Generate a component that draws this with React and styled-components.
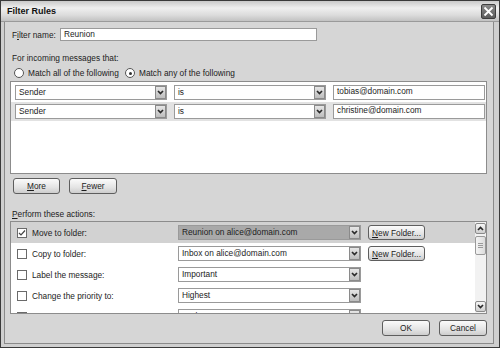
import React from 'react'
import styled, { createGlobalStyle } from 'styled-components'

const GlobalStyle = createGlobalStyle`
  html, body {
    margin: 0;
    padding: 0;
    background: #ffffff;
  }
  body {
    font-family: 'Liberation Sans', Arial, sans-serif;
    font-size: 8.3px;
    color: #1c1c1c;
  }
`

const conditions = [
  { field: 'Sender', op: 'is', value: 'tobias@domain.com' },
  { field: 'Sender', op: 'is', value: 'christine@domain.com', selected: true },
]

const actions = [
  { label: 'Move to folder:', value: 'Reunion on alice@domain.com', checked: true, folder: true, selected: true },
  { label: 'Copy to folder:', value: 'Inbox on alice@domain.com', folder: true },
  { label: 'Label the message:', value: 'Important' },
  { label: 'Change the priority to:', value: 'Highest' },
  { label: 'Set Junk Status to:', value: 'Junk' },
]

const Chevron = ({ up }) => (
  <svg width='7' height='5' viewBox='0 0 7 5'>
    <path
      d={up ? 'M1 4 L3.5 1.5 L6 4' : 'M1 1 L3.5 3.5 L6 1'}
      fill='none'
      stroke='#2a2a2a'
      strokeWidth='1.7'
    />
  </svg>
)

const ComboBox = ({ value, width, selected }) => (
  <Combo $width={width} $selected={selected}>
    <ComboText>{value}</ComboText>
    <DropButton>
      <Chevron />
    </DropButton>
  </Combo>
)

const App = () => {
  return (
    <>
      <GlobalStyle />
      <Window>
        <TitleBar>
          <Title>Filter Rules</Title>
          <CloseButton>
            <svg width='11' height='11' viewBox='0 0 11 11'>
              <path d='M1.5 1.5 L9.5 9.5 M9.5 1.5 L1.5 9.5' stroke='#ffffff' strokeWidth='1.8' />
            </svg>
          </CloseButton>
        </TitleBar>
        <Client>
          <NameRow>
            <Label>
              F<u>i</u>lter name:
            </Label>
            <NameInput>Reunion</NameInput>
          </NameRow>

          <SectionLabel $top={12}>For incoming messages that:</SectionLabel>
          <RadioRow>
            <RadioItem $width={111}>
              <Radio />
              Match all of the following
            </RadioItem>
            <RadioItem>
              <Radio $on />
              Match any of the following
            </RadioItem>
          </RadioRow>

          <ListBox>
            {conditions.map((c, i) => (
              <ConditionRow key={i} $selected={c.selected}>
                <ComboBox value={c.field} width={152} />
                <ComboBox value={c.op} width={152} />
                <TextField>{c.value}</TextField>
              </ConditionRow>
            ))}
          </ListBox>

          <ButtonRow>
            <Button $width={47}>
              <u>M</u>ore
            </Button>
            <Button $width={48}>
              <u>F</u>ewer
            </Button>
          </ButtonRow>

          <SectionLabel $top={15}>
            <u>P</u>erform these actions:
          </SectionLabel>

          <ActionBox>
            <ActionRows>
              {actions.map((a, i) => (
                <ActionRow key={i} $selected={a.selected}>
                  <Checkbox>
                    {a.checked && (
                      <svg width='8' height='8' viewBox='0 0 8 8'>
                        <path d='M1 4 L3 6 L7 1.5' fill='none' stroke='#444' strokeWidth='1.2' />
                      </svg>
                    )}
                  </Checkbox>
                  <ActionLabel>{a.label}</ActionLabel>
                  <ComboBox value={a.value} width={183} selected={a.selected} />
                  {a.folder && (
                    <Button $width={57} $height={15}>
                      <u>N</u>ew Folder...
                    </Button>
                  )}
                </ActionRow>
              ))}
            </ActionRows>
            <ScrollBar>
              <ScrollArrow>
                <Chevron up />
              </ScrollArrow>
              <ScrollThumb>
                <Grip />
              </ScrollThumb>
              <ScrollTrack />
              <ScrollArrow>
                <Chevron />
              </ScrollArrow>
            </ScrollBar>
          </ActionBox>

          <Footer>
            <Button $width={48}>OK</Button>
            <Button $width={48}>Cancel</Button>
          </Footer>
        </Client>
      </Window>
    </>
  )
}

const Window = styled.div`
  width: 500px;
  height: 348px;
  box-sizing: border-box;
  border: 1px solid #3a3a3a;
  background: #cfcfcf;
  display: flex;
  flex-direction: column;
  padding: 0 5px 3px 3px;
`

const TitleBar = styled.div`
  height: 20px;
  margin: 0 -5px 0 -3px;
  display: flex;
  align-items: center;
  justify-content: space-between;
  padding: 0 3px 0 6px;
  background: linear-gradient(#c9c9c9 0%, #efefef 35%, #dcdcdc 70%, #c2c2c2 100%);
  border-bottom: 1px solid #9a9a9a;
`

const Title = styled.div`
  font-weight: bold;
  font-size: 9px;
  color: #111;
`

const CloseButton = styled.div`
  width: 15px;
  height: 15px;
  box-sizing: border-box;
  border-radius: 2px;
  border: 1px solid #3e3e3e;
  background: linear-gradient(#8a8a8a, #5c5c5c);
  display: flex;
  align-items: center;
  justify-content: center;
`

const Client = styled.div`
  flex: 1;
  display: flex;
  flex-direction: column;
  background: #d6d6d6;
  border: 1px solid #8a8a8a;
  border-top: none;
  padding: 0 6px 0 5px;
`

const NameRow = styled.div`
  display: flex;
  align-items: center;
  margin-top: 6px;
  padding-left: 2px;
`

const Label = styled.span`
  width: 48px;
  flex-shrink: 0;
  white-space: nowrap;
`

const NameInput = styled.div`
  width: 257px;
  height: 13px;
  box-sizing: border-box;
  border: 1px solid #9a9a9a;
  background: #fff;
  padding-left: 3px;
  line-height: 11px;
`

const SectionLabel = styled.div`
  margin-top: ${(p) => p.$top}px;
  padding-left: 2px;
  height: 10px;
  line-height: 10px;
`

const RadioRow = styled.div`
  display: flex;
  align-items: center;
  height: 12px;
  margin-top: 4px;
  padding-left: 4px;
`

const RadioItem = styled.label`
  display: flex;
  align-items: center;
  gap: 4px;
  white-space: nowrap;
  width: ${(p) => (p.$width ? `${p.$width}px` : 'auto')};
`

const Radio = styled.span`
  width: 10px;
  height: 10px;
  box-sizing: border-box;
  border-radius: 50%;
  border: 1px solid #555;
  background: #fff;
  position: relative;
  flex-shrink: 0;
  &::after {
    content: '';
    display: ${(p) => (p.$on ? 'block' : 'none')};
    position: absolute;
    left: 2.5px;
    top: 2.5px;
    width: 3px;
    height: 3px;
    border-radius: 50%;
    background: #333;
  }
`

const ListBox = styled.div`
  margin-top: 2px;
  height: 93px;
  box-sizing: border-box;
  border: 1px solid #8c8c8c;
  background: #ffffff;
  padding-top: 1px;
`

const ConditionRow = styled.div`
  display: flex;
  align-items: center;
  gap: 7px;
  height: 19px;
  padding-left: 4px;
  background: ${(p) => (p.$selected ? '#e2e2e2' : 'transparent')};
`

const Combo = styled.div`
  width: ${(p) => p.$width}px;
  height: 15px;
  box-sizing: border-box;
  border: 1px solid #9a9a9a;
  background: ${(p) => (p.$selected ? '#a9a9a9' : '#ffffff')};
  display: flex;
  align-items: stretch;
  flex-shrink: 0;
`

const ComboText = styled.div`
  flex: 1;
  padding-left: 3px;
  line-height: 13px;
  white-space: nowrap;
  overflow: hidden;
`

const DropButton = styled.div`
  width: 11px;
  box-sizing: border-box;
  border: 1px solid #8a8a8a;
  background: linear-gradient(#e6e6e6, #bdbdbd);
  display: flex;
  align-items: center;
  justify-content: center;
`

const TextField = styled.div`
  width: 152px;
  height: 15px;
  box-sizing: border-box;
  border: 1px solid #9a9a9a;
  background: #fff;
  padding-left: 3px;
  line-height: 11px;
`

const ButtonRow = styled.div`
  display: flex;
  gap: 9px;
  margin-top: 4px;
  padding-left: 3px;
`

const Button = styled.div`
  width: ${(p) => p.$width}px;
  height: ${(p) => p.$height || 16}px;
  box-sizing: border-box;
  border: 1px solid #5e5e5e;
  border-radius: 3px;
  background: linear-gradient(#fbfbfb, #e4e4e4 60%, #cdcdcd);
  display: flex;
  align-items: center;
  justify-content: center;
  flex-shrink: 0;
`

const ActionBox = styled.div`
  margin-top: 2px;
  height: 93px;
  box-sizing: border-box;
  border: 1px solid #8c8c8c;
  background: #ffffff;
  display: flex;
`

const ActionRows = styled.div`
  flex: 1;
  overflow: hidden;
`

const ActionRow = styled.div`
  display: flex;
  align-items: center;
  height: 21px;
  padding-left: 6px;
  gap: 7px;
  background: ${(p) => (p.$selected ? '#d2d2d2' : 'transparent')};
`

const Checkbox = styled.span`
  width: 10px;
  height: 10px;
  box-sizing: border-box;
  border: 1px solid #6a6a6a;
  background: #fff;
  display: flex;
  align-items: center;
  justify-content: center;
  flex-shrink: 0;
  margin-right: -2px;
`

const ActionLabel = styled.span`
  width: 139px;
  flex-shrink: 0;
  white-space: nowrap;
`

const ScrollBar = styled.div`
  width: 11px;
  display: flex;
  flex-direction: column;
  background: #f2f2f2;
  padding: 1px 0;
`

const ScrollArrow = styled.div`
  height: 11px;
  box-sizing: border-box;
  border: 1px solid #8a8a8a;
  border-radius: 2px;
  background: linear-gradient(#f6f6f6, #cfcfcf);
  display: flex;
  align-items: center;
  justify-content: center;
`

const ScrollThumb = styled.div`
  height: 19px;
  margin-top: 2px;
  box-sizing: border-box;
  border: 1px solid #9a9a9a;
  border-radius: 2px;
  background: linear-gradient(90deg, #f4f4f4, #dcdcdc);
  display: flex;
  align-items: center;
  justify-content: center;
`

const Grip = styled.span`
  width: 5px;
  height: 5px;
  background: repeating-linear-gradient(#9a9a9a 0 1px, transparent 1px 2px);
`

const ScrollTrack = styled.div`
  flex: 1;
`

const Footer = styled.div`
  display: flex;
  justify-content: flex-end;
  gap: 9px;
  margin-top: 6px;
`

export default App
